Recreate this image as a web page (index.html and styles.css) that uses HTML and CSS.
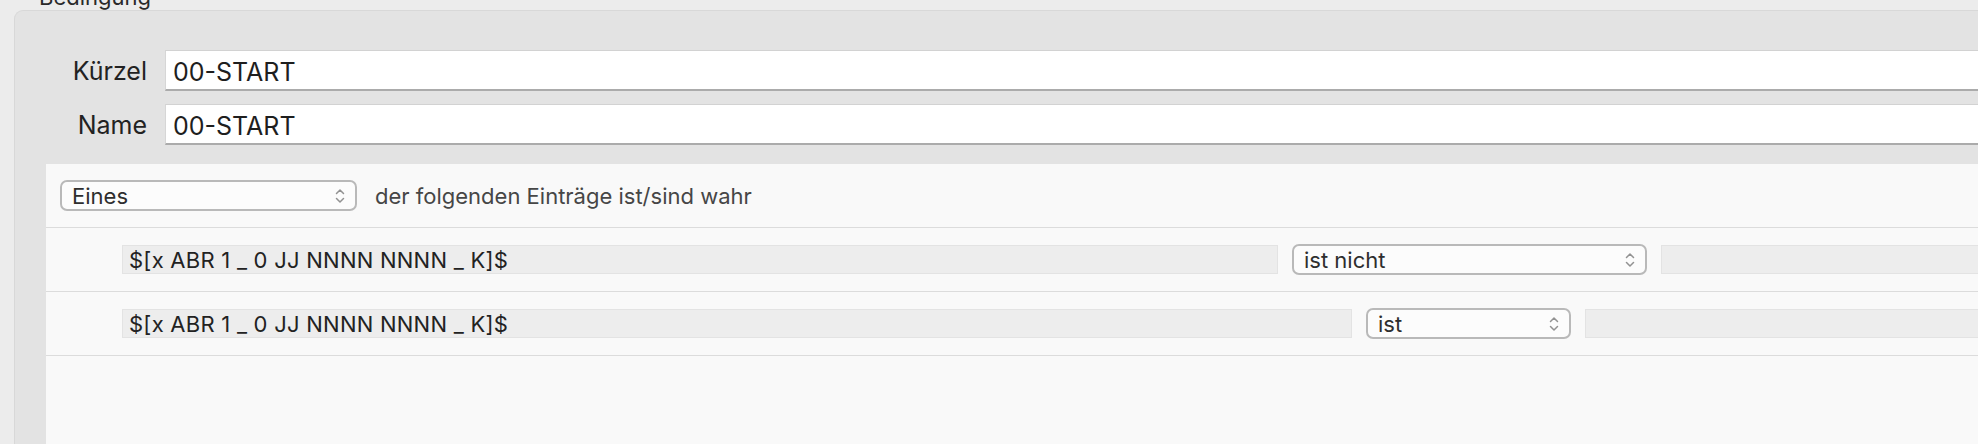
FILE: index.html
```
<!DOCTYPE html>
<html lang="de">
<head>
    <meta charset="UTF-8">
    <title>Bedingung</title>
    <link rel="stylesheet" href="styles.css">
</head>
<body>
    <div class="window">
        <div class="group-title">Bedingung</div>
        <div class="group">
            <div class="form-row">
                <label class="form-label">Kürzel</label>
                <div class="text-field">00-START</div>
            </div>
            <div class="form-row">
                <label class="form-label">Name</label>
                <div class="text-field">00-START</div>
            </div>

            <div class="rules">
                <div class="rule-head">
                    <div class="popup" style="width: 297px;">
                        <span>Eines</span>
                        <svg class="chevrons" width="10" height="18" viewBox="0 0 10 18"><path d="M1.5 6.5 L5 3 L8.5 6.5 M1.5 11.5 L5 15 L8.5 11.5"/></svg>
                    </div>
                    <span class="head-text">der folgenden Einträge ist/sind wahr</span>
                </div>

                <div class="rule-row">
                    <div class="token-field" style="width: 1156px;">$[x ABR 1 _ 0 JJ NNNN NNNN _ K]$</div>
                    <div class="popup" style="width: 355px;">
                        <span>ist nicht</span>
                        <svg class="chevrons" width="10" height="18" viewBox="0 0 10 18"><path d="M1.5 6.5 L5 3 L8.5 6.5 M1.5 11.5 L5 15 L8.5 11.5"/></svg>
                    </div>
                    <div class="value-field"></div>
                </div>

                <div class="rule-row">
                    <div class="token-field" style="width: 1230px;">$[x ABR 1 _ 0 JJ NNNN NNNN _ K]$</div>
                    <div class="popup" style="width: 205px;">
                        <span>ist</span>
                        <svg class="chevrons" width="10" height="18" viewBox="0 0 10 18"><path d="M1.5 6.5 L5 3 L8.5 6.5 M1.5 11.5 L5 15 L8.5 11.5"/></svg>
                    </div>
                    <div class="value-field"></div>
                </div>
            </div>
        </div>
    </div>
</body>
</html>
```

FILE: styles.css
```
body {
    margin: 0;
    height: 444px;
    overflow: hidden;
    background-color: #ececec;
    font-family: Inter, "Liberation Sans", sans-serif;
    color: #222;
}
.window {
    display: flex;
    flex-direction: column;
    width: 2150px;
    height: 444px;
    padding-left: 14px;
}
.group-title {
    margin: -13px 0 0 25px;
    height: 20px;
    font-size: 22px;
    line-height: 20px;
    color: #2a2a2a;
}
.group {
    flex: 1;
    display: flex;
    flex-direction: column;
    gap: 13px;
    margin-top: 3px;
    padding: 39px 0 0 31px;
    background-color: #e3e3e3;
    border-top: 1px solid #d8d8d8;
    border-left: 1px solid #d8d8d8;
    border-top-left-radius: 9px;
}
.form-row {
    display: flex;
    align-items: center;
    gap: 18px;
}
.form-label {
    width: 101px;
    text-align: right;
    font-size: 25px;
    color: #222;
}
.text-field {
    flex: 1;
    box-sizing: border-box;
    height: 41px;
    padding: 3px 0 0 7px;
    background-color: #fff;
    border-top: 1px solid #d2d2d2;
    border-left: 1px solid #d6d6d6;
    border-bottom: 2px solid #ababab;
    font-size: 25px;
    line-height: 36px;
    color: #1e1e1e;
}
.rules {
    flex: 1;
    margin-top: 6px;
    background-color: #f9f9f9;
}
.rule-head {
    display: flex;
    align-items: center;
    gap: 18px;
    height: 63px;
    padding-left: 14px;
    border-bottom: 1px solid #dcdcdc;
}
.head-text {
    font-size: 22px;
    color: #464646;
}
.popup {
    box-sizing: border-box;
    display: flex;
    align-items: center;
    justify-content: space-between;
    height: 31px;
    padding: 0 10px;
    background-color: #fcfcfc;
    border: 2px solid #b9b9b9;
    border-radius: 7px;
    font-size: 22px;
    color: #2e2e2e;
}
.chevrons path {
    fill: none;
    stroke: #929292;
    stroke-width: 1.5;
    stroke-linecap: round;
    stroke-linejoin: round;
}
.rule-row {
    display: flex;
    align-items: center;
    gap: 14px;
    height: 63px;
    padding-left: 76px;
    border-bottom: 1px solid #dcdcdc;
}
.token-field,
.value-field {
    box-sizing: border-box;
    height: 29px;
    background-color: #ededed;
    border: 1px solid #e3e3e3;
}
.token-field {
    padding-left: 6px;
    font-size: 22px;
    letter-spacing: 0.25px;
    line-height: 28px;
    color: #222;
}
.value-field {
    flex: 1;
}
```
